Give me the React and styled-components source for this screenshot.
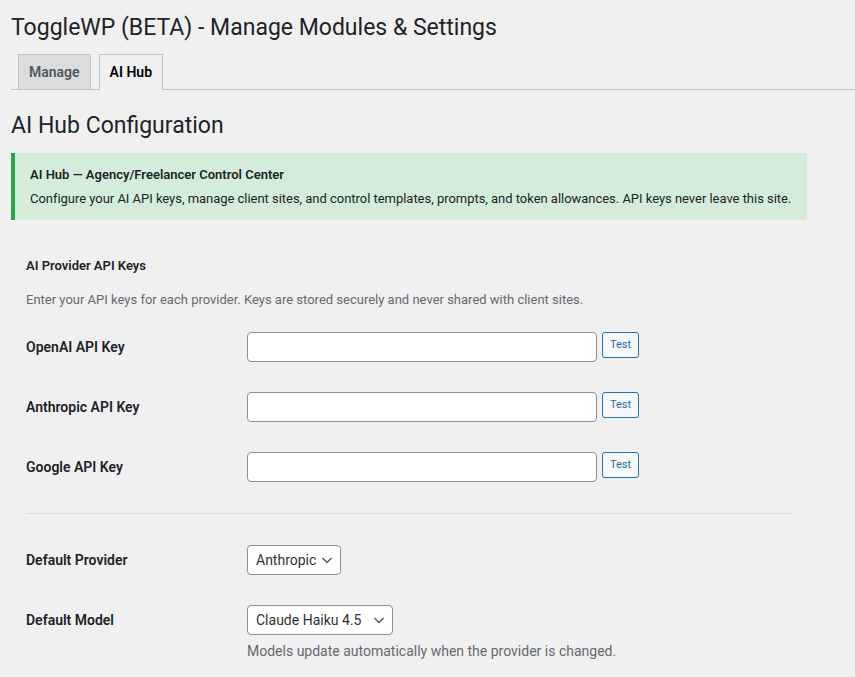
import React from "react";
import styled, { createGlobalStyle } from "styled-components";

const Global = createGlobalStyle`
  html, body { margin: 0; padding: 0; background: #f0f0f1; }
  body {
    font-family: "Segoe UI", Roboto, "Noto Sans", sans-serif;
    color: #1d2327;
    font-size: 13px;
  }
  * { box-sizing: border-box; }
`;

const Wrap = styled.div`
  padding: 13px 0 0 11px;
`;

const PageTitle = styled.h1`
  margin: 0;
  font-size: 23px;
  font-weight: 400;
  line-height: 29px;
  color: #1d2327;
`;

const TabBar = styled.nav`
  display: flex;
  margin-top: 12px;
  border-bottom: 1px solid #c3c4c7;
  padding-left: 7px;
  gap: 8px;
`;

const Tab = styled.a`
  display: block;
  padding: 5px 10px;
  font-size: 14px;
  font-weight: 600;
  line-height: 24px;
  border: 1px solid #c3c4c7;
  border-bottom: none;
  background: ${(p) => (p.$active ? "#f0f0f1" : "#dcdcde")};
  color: ${(p) => (p.$active ? "#000" : "#50575e")};
  margin-bottom: ${(p) => (p.$active ? "-1px" : "0")};
  padding-bottom: ${(p) => (p.$active ? "6px" : "5px")};
  text-decoration: none;
  cursor: pointer;
`;

const SectionTitle = styled.h2`
  margin: 21px 0 0;
  font-size: 23px;
  font-weight: 400;
  line-height: 29px;
  color: #1d2327;
`;

const Notice = styled.div`
  width: 796px;
  margin-top: 13px;
  background: #d4edda;
  border-left: 4px solid #28a745;
  padding: 11px 15px 10px;
`;

const NoticeTitle = styled.p`
  margin: 0;
  font-size: 13px;
  font-weight: 600;
  line-height: 22px;
  color: #1d2327;
`;

const NoticeText = styled.p`
  margin: 2px 0 0;
  font-size: 13px;
  line-height: 22px;
  letter-spacing: -0.03px;
  white-space: nowrap;
  color: #1d2327;
`;

const Card = styled.section`
  width: 796px;
  padding: 36px 15px 0;
`;

const CardHeading = styled.h3`
  margin: 0;
  font-size: 13px;
  font-weight: 600;
  line-height: 20px;
  color: #1d2327;
`;

const Description = styled.p`
  margin: ${(p) => p.$margin || "0"};
  font-size: ${(p) => p.$size || 13}px;
  line-height: 20px;
  color: #646970;
`;

const Rows = styled.div`
  display: flex;
  flex-direction: column;
`;

const Row = styled.div`
  display: grid;
  grid-template-columns: 221px 1fr;
  align-items: start;
  padding: 22px 0 8px;
`;

const Label = styled.label`
  font-size: 14px;
  font-weight: 600;
  line-height: 30px;
  color: #1d2327;
`;

const Field = styled.div`
  display: flex;
  flex-direction: column;
`;

const Inline = styled.div`
  display: flex;
  align-items: flex-start;
  gap: 5px;
`;

const TextInput = styled.input`
  width: 350px;
  height: 30px;
  border: 1px solid #8c8f94;
  border-radius: 4px;
  background: #fff;
  padding: 0 8px;
  font: inherit;
  font-size: 14px;
`;

const SmallButton = styled.button`
  height: 26px;
  padding: 0 7px;
  border: 1px solid #2271b1;
  border-radius: 3px;
  background: #f6f7f7;
  color: #2271b1;
  font-family: inherit;
  font-size: 11px;
  line-height: 24px;
  cursor: pointer;
`;

const Divider = styled.hr`
  border: none;
  border-top: 1px solid #dcdcde;
  margin: 23px 0 9px;
`;

const SelectBox = styled.div`
  display: inline-flex;
  align-items: center;
  justify-content: space-between;
  width: ${(p) => p.$width}px;
  height: 30px;
  border: 1px solid #8c8f94;
  border-radius: 4px;
  background: #fff;
  padding: 0 6px 0 8px;
  font-size: 14px;
  color: #2c3338;
  cursor: pointer;
`;

const Chevron = () => (
  <svg width="14" height="14" viewBox="0 0 14 14" aria-hidden="true">
    <path d="M2.5 5l4.5 4.5L11.5 5" fill="none" stroke="#50575e" strokeWidth="1.4" />
  </svg>
);

const keyRows = ["OpenAI API Key", "Anthropic API Key", "Google API Key"];

export default function App() {
  return (
    <>
      <Global />
      <Wrap>
        <PageTitle>ToggleWP (BETA) - Manage Modules &amp; Settings</PageTitle>
        <TabBar>
          <Tab>Manage</Tab>
          <Tab $active>AI Hub</Tab>
        </TabBar>
        <SectionTitle>AI Hub Configuration</SectionTitle>
        <Notice>
          <NoticeTitle>AI Hub — Agency/Freelancer Control Center</NoticeTitle>
          <NoticeText>
            Configure your AI API keys, manage client sites, and control templates, prompts, and token
            allowances. API keys never leave this site.
          </NoticeText>
        </Notice>
        <Card>
          <CardHeading>AI Provider API Keys</CardHeading>
          <Description $margin="14px 0 0">
            Enter your API keys for each provider. Keys are stored securely and never shared with client sites.
          </Description>
          <Rows>
            {keyRows.map((k) => (
              <Row key={k}>
                <Label>{k}</Label>
                <Inline>
                  <TextInput type="text" />
                  <SmallButton>Test</SmallButton>
                </Inline>
              </Row>
            ))}
          </Rows>
          <Divider />
          <Rows>
            <Row>
              <Label>Default Provider</Label>
              <Field>
                <SelectBox $width={94}>
                  <span>Anthropic</span>
                  <Chevron />
                </SelectBox>
              </Field>
            </Row>
            <Row>
              <Label>Default Model</Label>
              <Field>
                <SelectBox $width={146}>
                  <span>Claude Haiku 4.5</span>
                  <Chevron />
                </SelectBox>
                <Description $margin="6px 0 0" $size={14}>
                  Models update automatically when the provider is changed.
                </Description>
              </Field>
            </Row>
          </Rows>
        </Card>
      </Wrap>
    </>
  );
}
